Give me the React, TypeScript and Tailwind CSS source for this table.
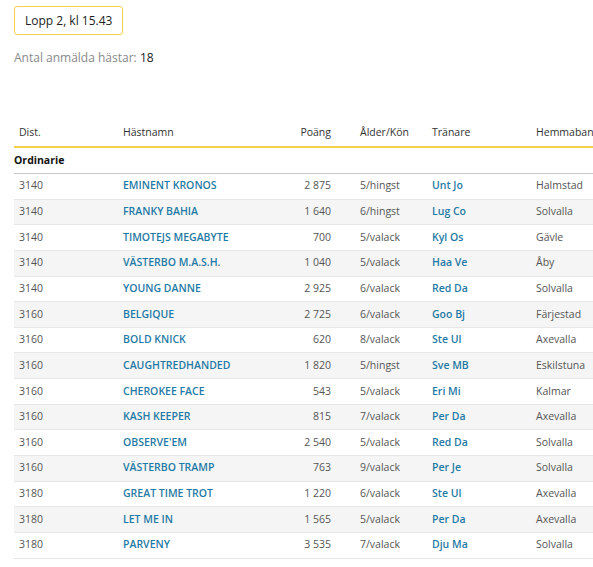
import React from "react";

const rows: [string, string, string, string, string, string][] = [
  ["3140", "EMINENT KRONOS", "2 875", "5/hingst", "Unt Jo", "Halmstad"],
  ["3140", "FRANKY BAHIA", "1 640", "6/hingst", "Lug Co", "Solvalla"],
  ["3140", "TIMOTEJS MEGABYTE", "700", "5/valack", "Kyl Os", "Gävle"],
  ["3140", "VÄSTERBO M.A.S.H.", "1 040", "5/valack", "Haa Ve", "Åby"],
  ["3140", "YOUNG DANNE", "2 925", "6/valack", "Red Da", "Solvalla"],
  ["3160", "BELGIQUE", "2 725", "6/valack", "Goo Bj", "Färjestad"],
  ["3160", "BOLD KNICK", "620", "8/valack", "Ste Ul", "Axevalla"],
  ["3160", "CAUGHTREDHANDED", "1 820", "5/hingst", "Sve MB", "Eskilstuna"],
  ["3160", "CHEROKEE FACE", "543", "5/valack", "Eri Mi", "Kalmar"],
  ["3160", "KASH KEEPER", "815", "7/valack", "Per Da", "Axevalla"],
  ["3160", "OBSERVE'EM", "2 540", "5/valack", "Red Da", "Solvalla"],
  ["3160", "VÄSTERBO TRAMP", "763", "9/valack", "Per Je", "Solvalla"],
  ["3180", "GREAT TIME TROT", "1 220", "6/valack", "Ste Ul", "Axevalla"],
  ["3180", "LET ME IN", "1 565", "5/valack", "Per Da", "Axevalla"],
  ["3180", "PARVENY", "3 535", "7/valack", "Dju Ma", "Solvalla"],
];

const grid = "grid grid-cols-[104px_164px_54px_91px_104px_120px] w-[637px]";

export default function App() {
  return (
    <div
      className="w-[593px] h-[567px] bg-white overflow-hidden text-[#333]"
      style={{ fontFamily: '"Open Sans", "Liberation Sans", sans-serif' }}
    >
      <div className="pl-[14px] pt-[6px]">
        <div className="inline-flex items-center h-[29px] px-[10px] border-[1.5px] border-[#f3d14c] rounded-[3px] text-[12px] font-medium text-[#222]">
          Lopp 2, kl 15.43
        </div>
        <div className="mt-[14px] text-[12px] text-[#8a8a8a]">
          Antal anmälda hästar: <span className="text-[#222]">18</span>
        </div>
        <div className="mt-[53px] overflow-hidden text-[10.5px]">
          <div className={`${grid} h-[28px] items-center border-b-2 border-[#f3d14c] text-[#333]`}>
            <div className="pl-[5px]">Dist.</div>
            <div className="pl-[5px]">Hästnamn</div>
            <div className="text-right pr-[5px]">Poäng</div>
            <div className="pl-[24px]">Ålder/Kön</div>
            <div className="pl-[5px]">Tränare</div>
            <div className="pl-[5px]">Hemmaban</div>
          </div>
          <div className="w-[637px] h-[26px] flex items-center border-b border-[#c8c8c8] font-bold text-[#111]">
            Ordinarie
          </div>
          {rows.map((r, i) => (
            <div
              key={i}
              className={`${grid} h-[25.65px] items-center border-b border-[#e6e6e6] text-[#555] ${
                i % 2 === 1 ? "bg-[#f5f5f5]" : "bg-white"
              }`}
            >
              <div className="pl-[5px]">{r[0]}</div>
              <div className="pl-[5px] font-semibold text-[#1f7aa5]">{r[1]}</div>
              <div className="text-right pr-[5px]">{r[2]}</div>
              <div className="pl-[24px]">{r[3]}</div>
              <div className="pl-[5px] font-semibold text-[#1f7aa5]">{r[4]}</div>
              <div className="pl-[5px]">{r[5]}</div>
            </div>
          ))}
        </div>
      </div>
    </div>
  );
}
